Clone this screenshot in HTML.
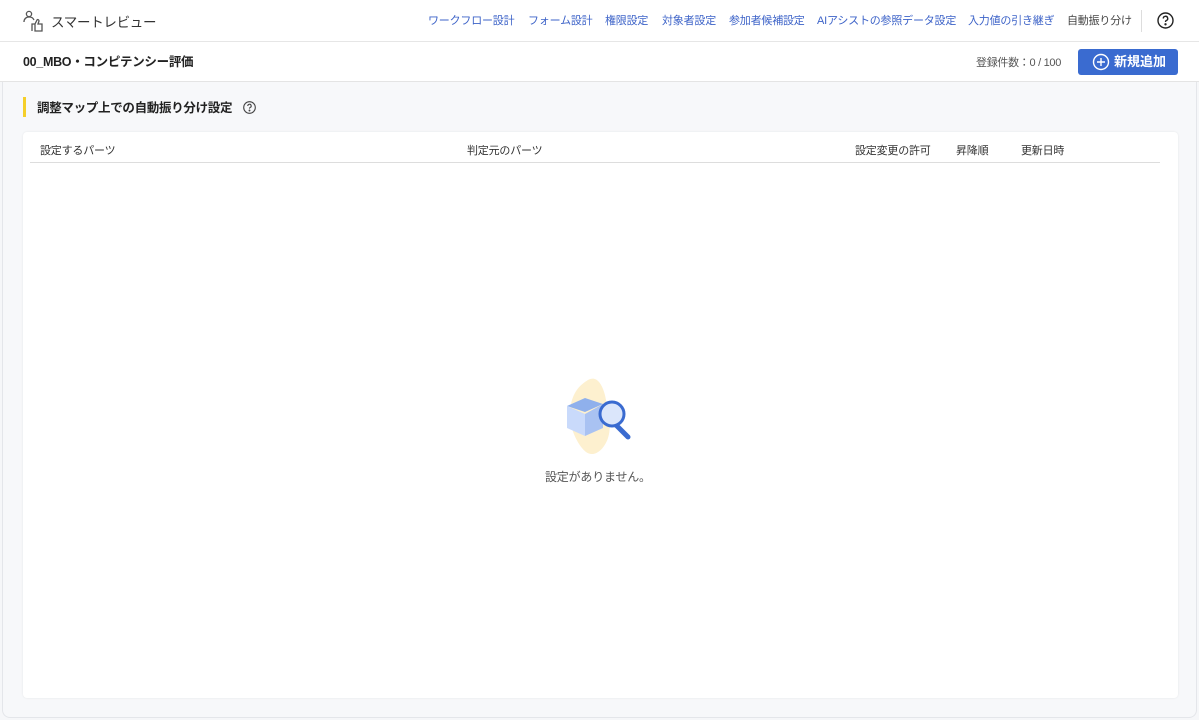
<!DOCTYPE html>
<html><head><meta charset="utf-8"><style>
*{box-sizing:border-box;margin:0;padding:0}
body{width:1199px;height:720px;background:#f6f7f9;font-family:"Liberation Sans","Noto Sans CJK JP",sans-serif;color:#333;position:relative;overflow:hidden}
.frame{position:absolute;left:2px;top:0;right:2px;bottom:2px;background:#f7f8fa;border-radius:0 0 8px 8px;border:1px solid #e4e6ea;border-top:none}
.hdr{position:absolute;left:0;top:0;width:100%;height:42px;background:#fff;border-bottom:1px solid #e6e6e6;box-shadow:0 1px 3px rgba(0,0,0,.06)}
.hdr .brand{position:absolute;left:51px;top:11px;font-size:13.5px;color:#333;letter-spacing:-0.3px}
.nav{position:absolute;top:12px;font-size:11px;color:#3d63c8;letter-spacing:-0.2px;white-space:nowrap}
.sub{position:absolute;left:0;top:42px;width:100%;height:40px;background:#fff;border-bottom:1px solid #e4e4e4}
.card{position:absolute;left:23px;top:132px;width:1155px;height:566px;background:#fff;border-radius:4px;box-shadow:0 0 2px rgba(0,0,0,.08)}
.th{position:absolute;top:142px;font-size:11px;color:#333;letter-spacing:-0.2px}
</style></head><body>
<div class="frame"></div>
<div class="hdr">
<svg style="position:absolute;left:23px;top:10px" width="22" height="22" viewBox="0 0 22 22" fill="none" stroke="#555" stroke-width="1.3"><circle cx="6" cy="4" r="2.6"/><path d="M1 12c0-3 2-5 5-5s4 1 5 3"/><path d="M9 21v-7h3M12 14l2-4c1-1 2 0 2 1l-1 3h4v7H12z"/></svg>
<div class="brand">スマートレビュー</div>
<div class="nav" style="left:428px">ワークフロー設計</div>
<div class="nav" style="left:528px">フォーム設計</div>
<div class="nav" style="left:605px">権限設定</div>
<div class="nav" style="left:662px">対象者設定</div>
<div class="nav" style="left:729px">参加者候補設定</div>
<div class="nav" style="left:817px">AIアシストの参照データ設定</div>
<div class="nav" style="left:968px">入力値の引き継ぎ</div>
<div class="nav" style="left:1067px;color:#444">自動振り分け</div>
<div style="position:absolute;left:1141px;top:10px;width:1px;height:22px;background:#ddd"></div>
<svg style="position:absolute;left:1157px;top:12px" width="17" height="17" viewBox="0 0 17 17" fill="none" stroke="#222" stroke-width="1.4"><circle cx="8.5" cy="8.5" r="7.5"/><path d="M6.3 6.5a2.2 2.2 0 1 1 3 2c-.7.3-.8.8-.8 1.5"/><circle cx="8.5" cy="12.3" r=".5" fill="#222"/></svg>
</div>
<div class="sub">
<div style="position:absolute;left:23px;top:9px;font-size:12.5px;font-weight:bold;color:#222;letter-spacing:-0.3px">00_MBO・コンピテンシー評価</div>
<div style="position:absolute;left:976px;top:12px;font-size:11px;color:#555;letter-spacing:-0.3px">登録件数：0 / 100</div>
<div style="position:absolute;left:1078px;top:7px;width:100px;height:26px;background:#3a6bd0;border-radius:3px;color:#fff;font-weight:bold;font-size:13px;line-height:26px;padding-left:36px">新規追加
<svg style="position:absolute;left:14px;top:4px" width="18" height="18" viewBox="0 0 18 18" fill="none" stroke="#fff" stroke-width="1.4"><circle cx="9" cy="9" r="7.5"/><path d="M9 5v8M5 9h8"/></svg></div>
</div>
<div style="position:absolute;left:23px;top:97px;width:3px;height:20px;background:#f5cf2a"></div>
<div style="position:absolute;left:37px;top:97px;font-size:12.5px;font-weight:bold;color:#222;letter-spacing:-0.3px">調整マップ上での自動振り分け設定</div>
<svg style="position:absolute;left:243px;top:101px" width="13" height="13" viewBox="0 0 13 13" fill="none" stroke="#444" stroke-width="1.1"><circle cx="6.5" cy="6.5" r="5.8"/><path d="M4.8 5a1.7 1.7 0 1 1 2.3 1.5c-.5.2-.6.6-.6 1.1"/><circle cx="6.5" cy="9.5" r=".4" fill="#444"/></svg>
<div class="card"></div>
<div class="th" style="left:40px">設定するパーツ</div>
<div class="th" style="left:467px">判定元のパーツ</div>
<div class="th" style="left:855px">設定変更の許可</div>
<div class="th" style="left:956px">昇降順</div>
<div class="th" style="left:1021px">更新日時</div>
<div style="position:absolute;left:30px;top:162px;width:1130px;height:1px;background:#ddd"></div>
<svg style="position:absolute;left:562px;top:376px" width="76" height="82" viewBox="0 0 76 82">
<path d="M26 4c10-6 16 8 18 20s6 26 2 38-14 20-22 14S6 50 8 34 16 10 26 4z" fill="#fdf0cf"/>
<path d="M5 30l18-8 18 6-18 8z" fill="#8fb0ec"/>
<path d="M5 30v22l18 8V38z" fill="#c9dafb"/>
<path d="M23 38v22l18-8V28z" fill="#a9c2f2"/>
<path d="M52 47l14 14" stroke="#3a6bd0" stroke-width="5" stroke-linecap="round"/>
<circle cx="50" cy="38" r="12" fill="#dbe6fb" stroke="#3a6bd0" stroke-width="3"/>
</svg>
<div style="position:absolute;left:545px;top:468px;font-size:12px;color:#555;letter-spacing:-0.2px">設定がありません。</div>
</body></html>
